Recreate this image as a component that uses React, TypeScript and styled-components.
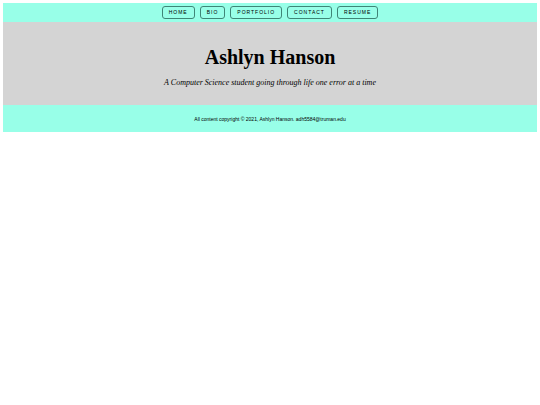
import React from 'react';
import styled, {createGlobalStyle} from 'styled-components';


const GlobalStyle = createGlobalStyle`
    body {
        margin: 3px;
        background-color: #fff;
        color: #000;
    }
`

const Nav = styled.nav`
    display: flex;
    justify-content: center;
    gap: 5px;
    padding: 3px 0;
    background-color: #98ffe8;
`

const NavLink = styled.a`
    padding: 0 6px;
    border: 1px solid #3f8577;
    border-radius: 3px;
    color: #000;
    font-family: "Liberation Sans", Arial, sans-serif;
    font-size: 5px;
    line-height: 11px;
    letter-spacing: 1px;
    text-transform: uppercase;
    text-decoration: none;
`

const Hero = styled.main`
    padding: 22px 0 17px;
    background-color: #d4d4d4;
    font-family: "Liberation Serif", "Times New Roman", serif;
    text-align: center;
`

const Name = styled.h1`
    margin: 0 0 8px;
    font-size: 20px;
    line-height: 26px;
`

const Tagline = styled.p`
    margin: 0;
    font-size: 8px;
    line-height: 10px;
    font-style: italic;
`

const Footer = styled.footer`
    padding: 9px 0 8px;
    background-color: #98ffe8;
    font-family: "Liberation Sans", Arial, sans-serif;
    font-size: 5px;
    line-height: 10px;
    text-align: center;
`

const links = ['Home', 'Bio', 'Portfolio', 'Contact', 'Resume'];

const App: React.FC = () => {

    return (
        <>
            <GlobalStyle />
            <Nav>
                {
                    links.map(link => (
                        <NavLink key={link} href={`#${link.toLowerCase()}`}>{link}</NavLink>
                    ))
                }
            </Nav>
            <Hero>
                <Name>Ashlyn Hanson</Name>
                <Tagline>A Computer Science student going through life one error at a time</Tagline>
            </Hero>
            <Footer>All content copyright © 2021, Ashlyn Hanson. adh5584@truman.edu</Footer>
        </>
    )
}

export default App;
